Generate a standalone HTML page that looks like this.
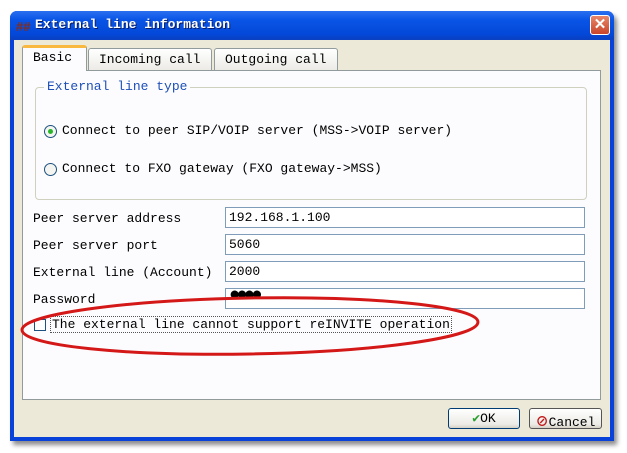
<!DOCTYPE html>
<html><head><style>
*{box-sizing:border-box;margin:0;padding:0}
body{width:627px;height:453px;background:#fff;position:relative;overflow:hidden;font-family:"Liberation Mono","Noto Sans CJK SC",monospace;font-size:13px;color:#000}
.win{position:absolute;left:10px;top:11px;width:604px;height:430px;background:#0842d8;border-radius:7px 7px 0 0;box-shadow:3px 4px 5px rgba(0,0,0,.45)}
.title{position:absolute;left:0;top:0;width:604px;height:29px;border-radius:7px 7px 0 0;background:linear-gradient(#2a6ff0,#0a55e6 30%,#0348d8 80%,#0a3fc0)}
.ttext{position:absolute;left:25px;top:6px;color:#fff;font-weight:bold;font-size:13px;text-shadow:1px 1px #0a1e6a}
.close{position:absolute;left:580px;top:4px;width:20px;height:20px;border:1px solid #fff;border-radius:3px;background:linear-gradient(#e8866a,#c9452a);color:#fff;font:bold 15px "Liberation Sans",sans-serif;text-align:center;line-height:18px}
.body{position:absolute;left:4px;top:29px;width:596px;height:397px;background:#ece9d8}
.panel{position:absolute;left:8px;top:30px;width:579px;height:330px;background:#fcfcfe;border:1px solid #919b9c}
.tab{position:absolute;top:8px;height:22px;border:1px solid #919b9c;border-bottom:none;background:linear-gradient(#fff,#ecebe6);padding:3px 0 0 10px;border-radius:3px 3px 0 0}
.tab.a{top:5px;height:26px;background:#fcfcfe;border-top:3px solid #f9b83f;padding-top:2px;z-index:2}
.grp{position:absolute;left:12px;top:16px;width:552px;height:113px;border:1px solid #d0d0bf;border-radius:4px}
.legend{position:absolute;left:8px;top:-9px;background:#fcfcfe;color:#1d4fb8;padding:0 3px}
.rad{position:absolute;left:8px;width:13px;height:13px;border:1px solid #1c5180;border-radius:50%;background:#f4f4f0}
.dot{position:absolute;left:3px;top:3px;width:5px;height:5px;border-radius:50%;background:#29b529}
.lbl{position:absolute}
.inp{position:absolute;left:202px;width:360px;height:21px;border:1px solid #7f9db9;background:#fff;padding:2px 0 0 3px}
.btn{position:absolute;top:368px;height:21px;border:1px solid #003c74;border-radius:3px;background:linear-gradient(#fff,#ecebe6 80%,#d6d0c5);text-align:center;padding-top:2px}
</style></head><body>
<div class="win">
<div class="title"><div style="position:absolute;left:6px;top:8px;width:16px;height:14px;color:#8a2a10;font:bold 13px 'Liberation Sans',sans-serif">##</div><div class="ttext">External line information</div><div class="close">✕</div></div>
<div class="body">
<div class="tab a" style="left:8px;width:65px">Basic</div>
<div class="tab" style="left:74px;width:124px">Incoming call</div>
<div class="tab" style="left:200px;width:124px">Outgoing call</div>
<div class="panel" style="top:30px">
<div class="grp"><div class="legend">External line type</div>
<div class="rad" style="top:37px"><div class="dot"></div></div><div class="lbl" style="left:26px;top:35px">Connect to peer SIP/VOIP server (MSS-&gt;VOIP server)</div>
<div class="rad" style="top:75px"></div><div class="lbl" style="left:26px;top:73px">Connect to FXO gateway (FXO gateway-&gt;MSS)</div>
</div>
<div class="lbl" style="left:10px;top:140px">Peer server address</div><div class="inp" style="top:136px">192.168.1.100</div>
<div class="lbl" style="left:10px;top:167px">Peer server port</div><div class="inp" style="top:163px">5060</div>
<div class="lbl" style="left:10px;top:194px">External line (Account)</div><div class="inp" style="top:190px">2000</div>
<div class="lbl" style="left:10px;top:221px">Password</div><div class="inp" style="top:217px;font-size:19px;line-height:12px;letter-spacing:-4px;padding-top:0">●●●●</div>
<div style="position:absolute;left:11px;top:248px;width:12px;height:12px;border:1px solid #1c5180;background:#fff"></div>
<div class="lbl" style="left:27px;top:245px;border:1px dotted #555;padding:0 1px">The external line cannot support reINVITE operation</div>
</div>
<div class="btn" style="left:434px;width:72px"><span style="color:#2aa030;font-weight:bold">✔</span>OK</div>
<div class="btn" style="left:515px;width:73px;border-color:#555"><span style="color:#c01818;font-weight:bold">⊘</span>Cancel</div>
</div>
</div>
<svg style="position:absolute;left:0;top:0" width="627" height="453"><ellipse cx="250" cy="326" rx="228" ry="28" fill="none" stroke="#d41818" stroke-width="3" transform="rotate(-1 250 326)"/></svg>
</body></html>
